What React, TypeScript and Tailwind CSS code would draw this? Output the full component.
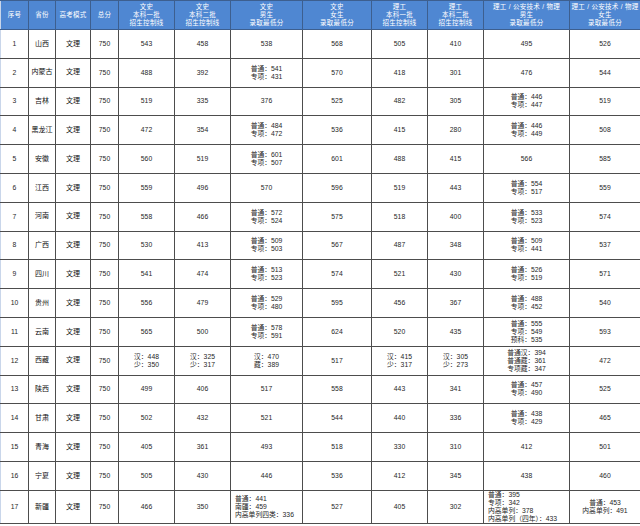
type Cell = string | string[];

interface Row {
  no: number;
  province: string;
  cells: Cell[];
}

const headers: string[][] = [
  ['序号'],
  ['省份'],
  ['高考模式'],
  ['总分'],
  ['文史', '本科一批', '招生控制线'],
  ['文史', '本科二批', '招生控制线'],
  ['文史', '男生', '录取最低分'],
  ['文史', '女生', '录取最低分'],
  ['理工', '本科一批', '招生控制线'],
  ['理工', '本科二批', '招生控制线'],
  ['理工 / 公安技术 / 物理', '男生', '录取最低分'],
  ['理工 / 公安技术 / 物理', '女生', '录取最低分'],
];

const widths = [28, 27, 35, 28, 56, 56, 72, 69, 56, 56, 86, 71];

const rows: Row[] = [
  { no: 1, province: '山西', cells: ['543', '458', '538', '568', '505', '410', '495', '526'] },
  { no: 2, province: '内蒙古', cells: ['488', '392', ['普通：541', '专项：431'], '570', '418', '301', '476', '544'] },
  { no: 3, province: '吉林', cells: ['519', '335', '376', '525', '482', '305', ['普通：446', '专项：447'], '519'] },
  { no: 4, province: '黑龙江', cells: ['472', '354', ['普通：484', '专项：472'], '536', '415', '280', ['普通：446', '专项：449'], '508'] },
  { no: 5, province: '安徽', cells: ['560', '519', ['普通：601', '专项：507'], '601', '488', '415', '566', '585'] },
  { no: 6, province: '江西', cells: ['559', '496', '570', '596', '519', '443', ['普通：554', '专项：517'], '559'] },
  { no: 7, province: '河南', cells: ['558', '466', ['普通：572', '专项：524'], '575', '518', '400', ['普通：533', '专项：523'], '574'] },
  { no: 8, province: '广西', cells: ['530', '413', ['普通：509', '专项：503'], '567', '487', '348', ['普通：509', '专项：441'], '537'] },
  { no: 9, province: '四川', cells: ['541', '474', ['普通：513', '专项：523'], '574', '521', '430', ['普通：526', '专项：519'], '571'] },
  { no: 10, province: '贵州', cells: ['556', '479', ['普通：529', '专项：480'], '595', '456', '367', ['普通：488', '专项：452'], '540'] },
  { no: 11, province: '云南', cells: ['565', '500', ['普通：578', '专项：591'], '624', '520', '435', ['普通：555', '专项：549', '预科：535'], '593'] },
  {
    no: 12,
    province: '西藏',
    cells: [
      ['汉：448', '少：350'],
      ['汉：325', '少：317'],
      ['汉：470', '藏：389'],
      '517',
      ['汉：415', '少：317'],
      ['汉：305', '少：273'],
      ['普通汉：394', '普通藏：361', '专项藏：347'],
      '472',
    ],
  },
  { no: 13, province: '陕西', cells: ['499', '406', '517', '558', '443', '341', ['普通：457', '专项：490'], '525'] },
  { no: 14, province: '甘肃', cells: ['502', '432', '521', '544', '440', '336', ['普通：438', '专项：429'], '465'] },
  { no: 15, province: '青海', cells: ['405', '361', '493', '518', '330', '310', '412', '501'] },
  { no: 16, province: '宁夏', cells: ['505', '430', '446', '536', '412', '345', '438', '460'] },
  {
    no: 17,
    province: '新疆',
    cells: [
      '466',
      '350',
      ['普通：441', '南疆：459', '内高单列四类：336'],
      '527',
      '405',
      '302',
      ['普通：395', '专项：342', '内高单列：378', '内高单列（四年）：433'],
      ['普通：453', '内高单列：491'],
    ],
  },
];

const font = { fontFamily: '"Liberation Sans", "Noto Sans CJK SC", sans-serif' };

function Value({ value, left }: { value: Cell; left: boolean }) {
  if (typeof value === 'string') return <span>{value}</span>;
  return (
    <div className={left ? 'flex flex-col items-start pl-[4px]' : 'flex flex-col items-center'}>
      {value.map((line) => (
        <div key={line} className="h-[8px] leading-[8px] whitespace-nowrap">
          {line}
        </div>
      ))}
    </div>
  );
}

export default function App() {
  return (
    <div className="w-[640px] h-[526px] bg-white overflow-hidden" style={font}>
      <table className="table-fixed border-collapse w-[639px] text-[6.8px] text-[#262626]">
        <colgroup>
          {widths.map((w, i) => (
            <col key={i} style={{ width: w }} />
          ))}
        </colgroup>
        <thead>
          <tr className="h-[29px] bg-[#4f87d2] text-white">
            {headers.map((lines, i) => (
              <th
                key={i}
                className="border border-[#3d5f8f] first:border-l-[#c9d6ea] font-normal text-[6.5px] tracking-[0.3px] p-0 text-center align-middle"
              >
                {lines.map((l) => (
                  <div key={l} className="h-[8px] leading-[8px] whitespace-nowrap">
                    {l}
                  </div>
                ))}
              </th>
            ))}
          </tr>
        </thead>
        <tbody>
          {rows.map((row) => {
            const last = row.no === 17;
            return (
              <tr key={row.no} className={last ? 'h-[33px]' : 'h-[28.8px]'}>
                <td className="border border-[#4d4d4d] border-l-[#c9d6ea] text-center p-0">{row.no}</td>
                <td className="border border-[#4d4d4d] text-center p-0 text-[7px] text-[#0f0f0f] whitespace-nowrap">
                  {row.province}
                </td>
                <td className="border border-[#4d4d4d] text-center p-0 text-[7px] text-[#0f0f0f]">文理</td>
                <td className="border border-[#4d4d4d] text-center p-0">750</td>
                {row.cells.map((c, i) => {
                  const left = last && (i === 2 || i === 6);
                  return (
                    <td
                      key={i}
                      className={
                        left
                          ? 'border border-[#4d4d4d] text-left p-0 align-middle'
                          : 'border border-[#4d4d4d] text-center p-0 align-middle'
                      }
                    >
                      <Value value={c} left={left} />
                    </td>
                  );
                })}
              </tr>
            );
          })}
        </tbody>
      </table>
    </div>
  );
}
